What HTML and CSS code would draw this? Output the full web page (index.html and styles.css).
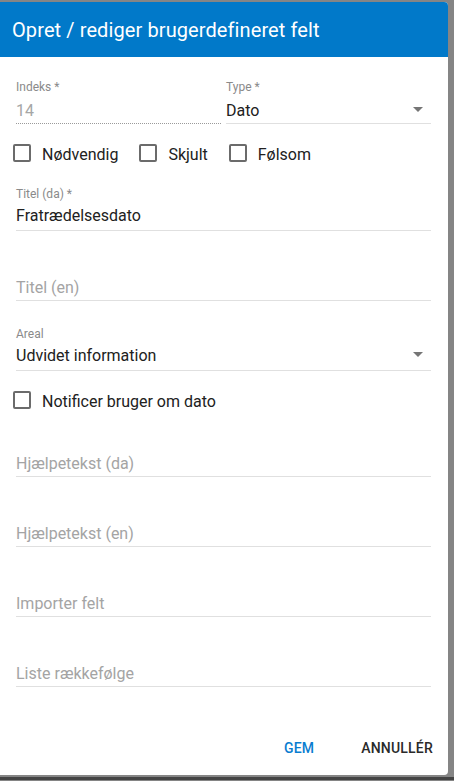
FILE: index.html
```html
<!DOCTYPE html>
<html lang="da">
<head>
<meta charset="utf-8">
<title>Opret / rediger brugerdefineret felt</title>
<link rel="stylesheet" href="styles.css">
</head>
<body>
<div class="dialog">
  <div class="header">
    <h2 class="title">Opret / rediger brugerdefineret felt</h2>
  </div>
  <div class="content">
    <div class="row2">
      <div class="field first disabled">
        <div class="label">Indeks *</div>
        <div class="value">14</div>
      </div>
      <div class="field first">
        <div class="label">Type *</div>
        <div class="value select"><span>Dato</span><svg class="arrow" viewBox="0 0 10 5" width="10" height="5"><path d="M0 0 L5 5 L10 0 Z"/></svg></div>
      </div>
    </div>

    <div class="checks">
      <label class="check"><span class="box"></span><span class="check-text">Nødvendig</span></label>
      <label class="check"><span class="box"></span><span class="check-text">Skjult</span></label>
      <label class="check"><span class="box"></span><span class="check-text">Følsom</span></label>
    </div>

    <div class="field after-checks">
      <div class="label">Titel (da) *</div>
      <div class="value">Fratrædelsesdato</div>
    </div>

    <div class="field gap">
      <div class="label"></div>
      <div class="value ph">Titel (en)</div>
    </div>

    <div class="field gap">
      <div class="label">Areal</div>
      <div class="value select"><span>Udvidet information</span><svg class="arrow" viewBox="0 0 10 5" width="10" height="5"><path d="M0 0 L5 5 L10 0 Z"/></svg></div>
    </div>

    <div class="checks">
      <label class="check"><span class="box"></span><span class="check-text">Notificer bruger om dato</span></label>
    </div>

    <div class="field after-notify">
      <div class="label"></div>
      <div class="value ph">Hjælpetekst (da)</div>
    </div>

    <div class="field gap">
      <div class="label"></div>
      <div class="value ph">Hjælpetekst (en)</div>
    </div>

    <div class="field gap">
      <div class="label"></div>
      <div class="value ph">Importer felt</div>
    </div>

    <div class="field gap">
      <div class="label"></div>
      <div class="value ph">Liste rækkefølge</div>
    </div>
  </div>

  <div class="actions">
    <button class="btn primary">GEM</button>
    <button class="btn">ANNULLÉR</button>
  </div>
</div>
<div class="behind"></div>
</body>
</html>
```

FILE: styles.css
```css
html, body {
  margin: 0;
  padding: 0;
}

body {
  background: #858585;
  padding-top: 2px;
  font-family: Roboto, "Liberation Sans", Arial, sans-serif;
  height: 779px;
  overflow: hidden;
}

.dialog {
  width: 448px;
  height: 773px;
  background: #ffffff;
  border-radius: 0 4px 4px 0;
  overflow: hidden;
  display: flex;
  flex-direction: column;
}

.header {
  background: #0179c9;
  height: 55px;
  box-sizing: border-box;
  padding: 12px 12px 11px 12px;
}

.title {
  margin: 0;
  color: #ffffff;
  font-size: 20px;
  line-height: 32px;
  font-weight: 400;
  letter-spacing: 0.1px;
  white-space: nowrap;
}

.content {
  padding: 23px 17px 0 16px;
}

.row2 {
  display: grid;
  grid-template-columns: 1fr 1fr;
  column-gap: 5px;
}

.field {
  display: flex;
  flex-direction: column;
}

.label {
  font-size: 12px;
  line-height: 14px;
  height: 14px;
  color: #8a8a8a;
  white-space: nowrap;
}

.value {
  font-size: 16px;
  line-height: 24px;
  height: 24px;
  color: #212121;
  margin-top: 3px;
  padding-bottom: 2px;
  border-bottom: 1px solid #e0e0e0;
  white-space: nowrap;
}

.field.first .value {
  margin-top: 5px;
  padding-bottom: 0;
}

.field.disabled .value {
  color: #a6a6a6;
  border-bottom: 1px dotted #9a9a9a;
}

.value.ph {
  color: #a4a4a4;
  margin-top: 5px;
  padding-bottom: 0;
}

.select {
  display: flex;
  justify-content: space-between;
  align-items: flex-start;
}

.arrow {
  margin-top: 8px;
  margin-right: 8px;
  fill: #757575;
  flex: none;
}

.checks {
  display: flex;
  align-items: flex-start;
  gap: 21px;
  height: 24px;
  margin-top: 17px;
  margin-left: -3px;
}

.check {
  display: flex;
  align-items: flex-start;
  gap: 11px;
  font-size: 16px;
  line-height: 24px;
  color: #212121;
  white-space: nowrap;
}

.check-text {
  margin-top: 2px;
}

.box {
  width: 18px;
  height: 18px;
  margin-top: 3px;
  box-sizing: border-box;
  border: 2px solid #6b6b6b;
  border-radius: 2px;
  flex: none;
}

.after-checks {
  margin-top: 22px;
}

.after-notify {
  margin-top: 21px;
}

.gap {
  margin-top: 26px;
}

.actions {
  display: flex;
  justify-content: flex-end;
  gap: 31px;
  margin-top: 43px;
  padding-right: 7px;
}

.btn {
  border: none;
  background: none;
  padding: 0 8px;
  height: 36px;
  line-height: 36px;
  font-family: Roboto, "Liberation Sans", Arial, sans-serif;
  font-size: 14px;
  font-weight: 500;
  letter-spacing: 0.2px;
  color: #2a2a2a;
  cursor: pointer;
}

.btn.primary {
  color: #0a7dd0;
}

.behind {
  height: 3px;
  margin-top: 2px;
  background: #444444;
}
```
